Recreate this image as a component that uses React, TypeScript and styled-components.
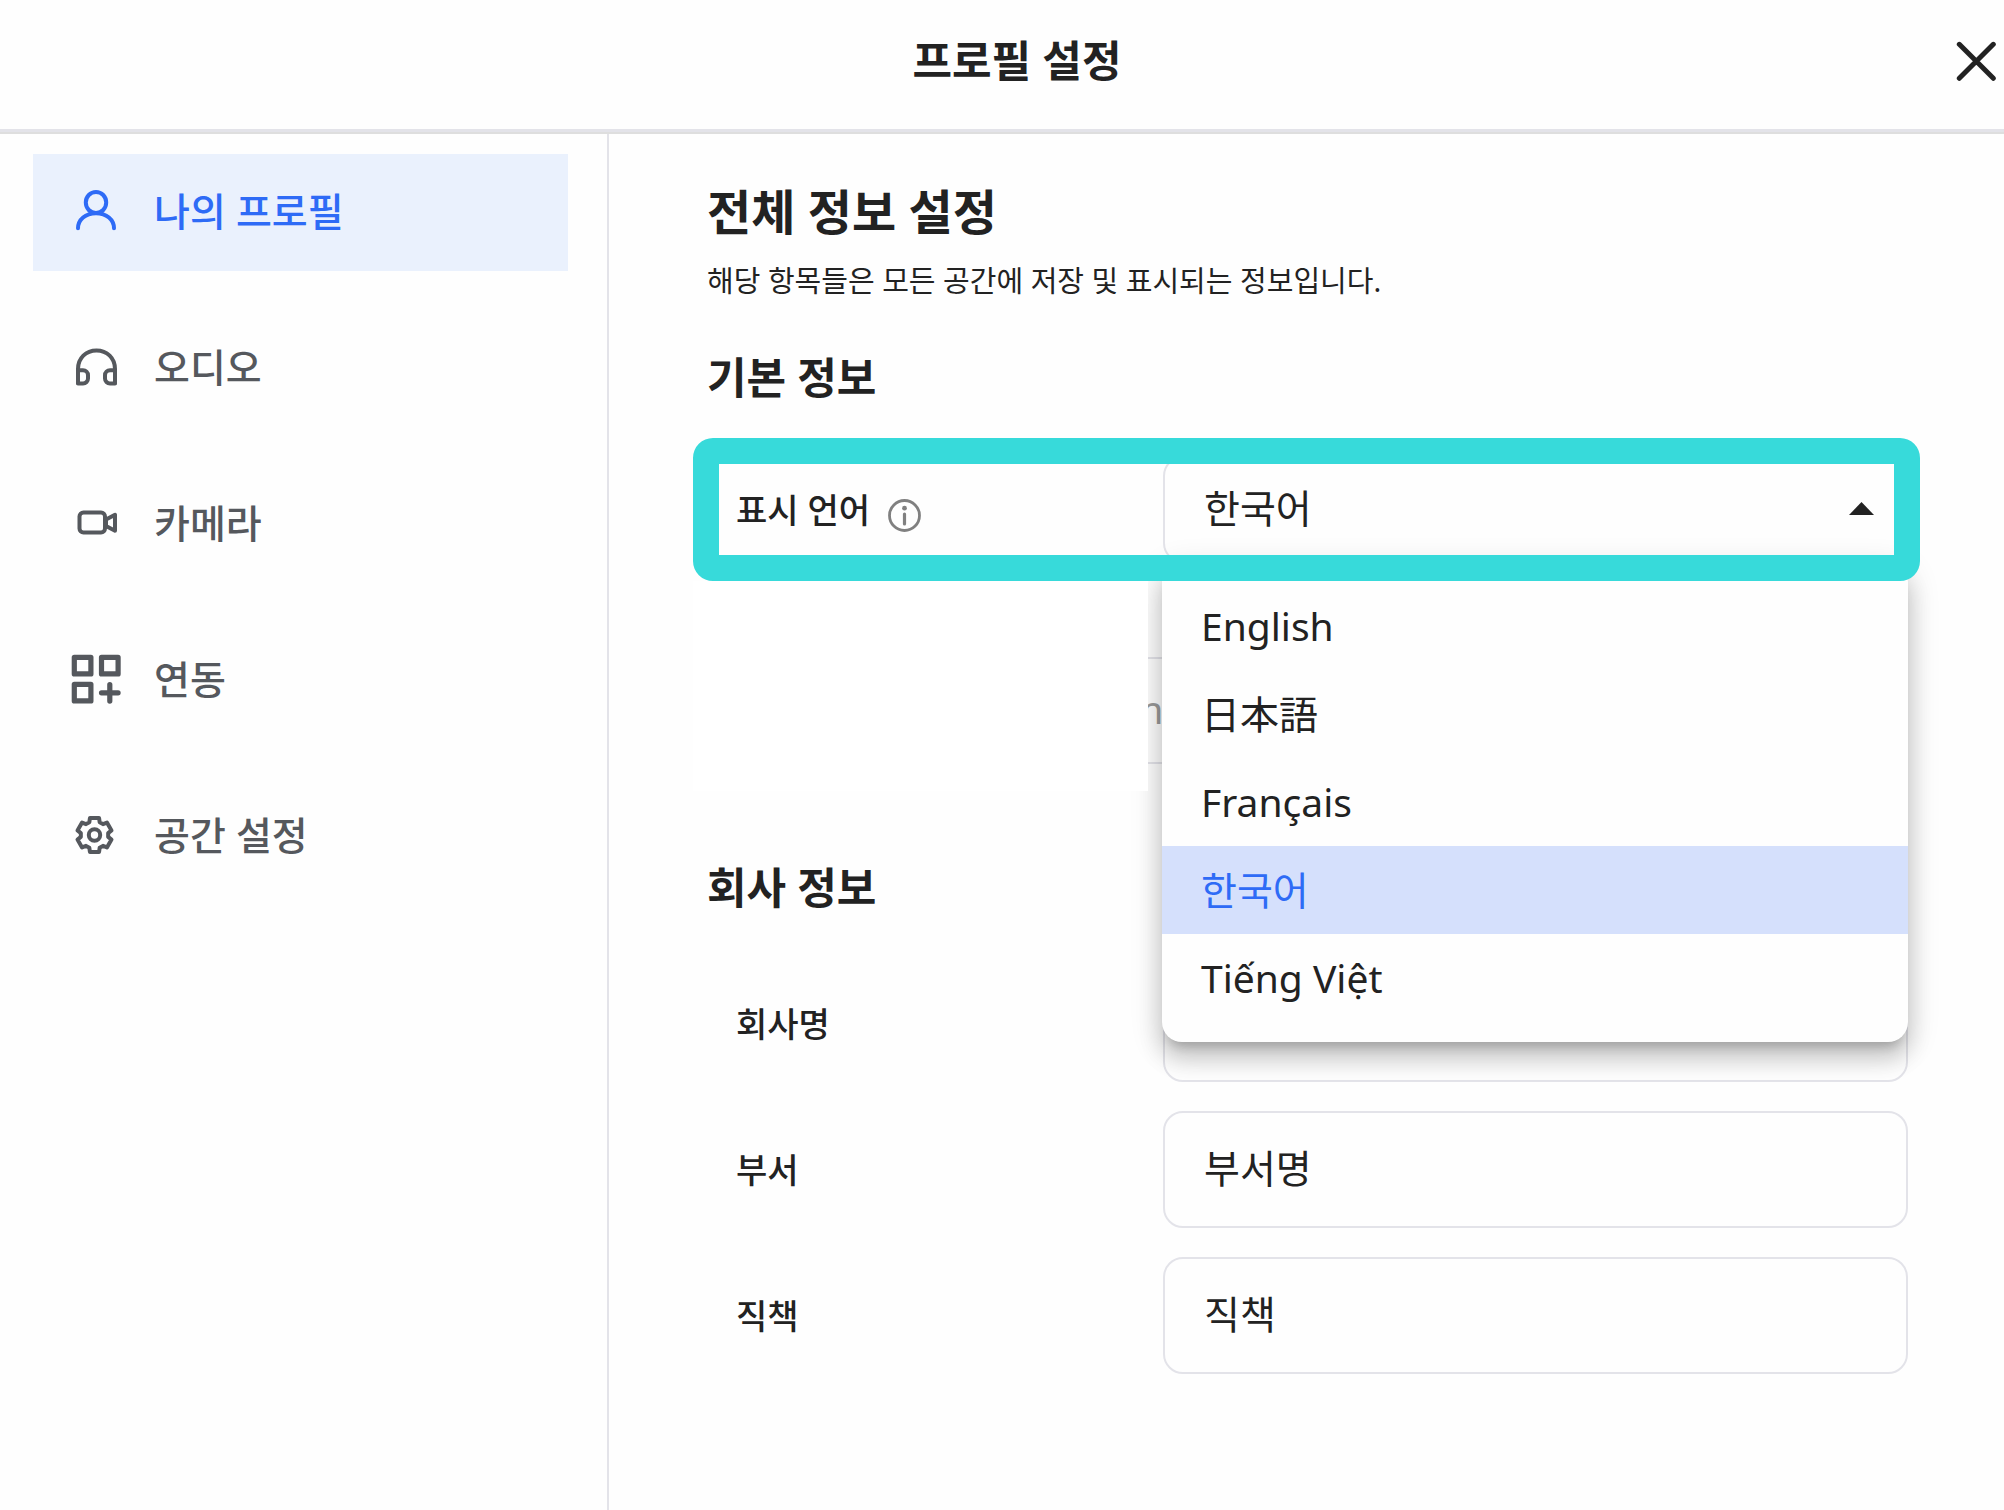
import React, { useState } from "react";
import styled, { createGlobalStyle } from "styled-components";

const color = {
  text: "#222222",
  muted: "#55585d",
  primary: "#2e6bf6",
  primarySoft: "#eaf1fd",
  selected: "#d5e0fc",
  line: "#e3e3e9",
  page: "#fefefe",
  highlight: "#37dada",
};

const GlobalStyle = createGlobalStyle`
  *, *::before, *::after { box-sizing: border-box; }
  body {
    margin: 0;
    background: ${color.page};
    color: ${color.text};
    font-family: "Noto Sans", "Noto Sans CJK KR", "Noto Sans CJK JP", sans-serif;
  }
  button, input, select { font: inherit; color: inherit; }
  h1, h2, p, ul { margin: 0; padding: 0; }
`;

const Page = styled.div`
  display: flex;
  flex-direction: column;
  min-height: 100vh;
`;

const Header = styled.header`
  display: grid;
  grid-template-columns: 40px 1fr 40px;
  align-items: center;
  height: 132px;
  padding: 0 8px 8px 38px;
  border-bottom: 3px solid ${color.line};
`;

const Title = styled.h1`
  grid-column: 2;
  font-size: 43px;
  line-height: 60px;
  font-weight: 700;
  text-align: center;
`;

const CloseButton = styled.button`
  display: flex;
  padding: 0;
  border: 0;
  background: none;
  cursor: pointer;
`;

const Body = styled.div`
  display: flex;
  flex: 1;
  border-top: 2px solid #dedede;
`;

const Sidebar = styled.nav`
  display: flex;
  flex-direction: column;
  gap: 39px;
  flex: 0 0 609px;
  padding: 20px 39px 20px 33px;
  border-right: 2px solid ${color.line};
`;

const NavItem = styled.button<{ $active: boolean }>`
  display: flex;
  align-items: center;
  gap: 34px;
  height: 117px;
  padding: 0 39px 3px;
  border: 0;
  background: ${(p) => (p.$active ? color.primarySoft : "transparent")};
  color: ${(p) => (p.$active ? color.primary : color.muted)};
  font-size: 39px;
  line-height: 56px;
  font-weight: 500;
  text-align: left;
  cursor: pointer;
`;

const NavIcon = styled.svg`
  flex: none;
  width: 48px;
  height: 48px;
  overflow: visible;
  fill: none;
  stroke: currentColor;
  stroke-width: 4;
  stroke-linecap: round;
  stroke-linejoin: round;
`;

const Main = styled.main`
  flex: 1;
  min-width: 0;
  padding: 46px 84px;
`;

const PageHeading = styled.h2`
  padding: 0 14px;
  font-size: 48px;
  line-height: 64px;
  font-weight: 700;
`;

const Description = styled.p`
  padding: 17px 14px 47px;
  font-size: 29px;
  line-height: 40px;
`;

const SectionHeading = styled.h2`
  padding: 0 14px;
  font-size: 43px;
  line-height: 60px;
  font-weight: 700;
`;

const Highlight = styled.div`
  position: relative;
  margin-top: 30px;
  padding: 18px 0;

  &::after {
    content: "";
    position: absolute;
    inset: 0;
    z-index: 3;
    border: 26px solid ${color.highlight};
    border-radius: 20px;
    pointer-events: none;
  }
`;

const Row = styled.div`
  display: grid;
  grid-template-columns: 427px 1fr;
  align-items: center;
  padding: 0 12px 0 43px;
`;

const LabelLine = styled.div`
  display: flex;
  align-items: flex-end;
  gap: 18px;
`;

const Label = styled.label`
  font-size: 34px;
  line-height: 44px;
  font-weight: 500;
`;

const InfoButton = styled.button`
  display: flex;
  padding: 0;
  border: 0;
  background: none;
  color: #808080;
`;

const SelectWrap = styled.div`
  position: relative;
`;

const Select = styled.select`
  display: block;
  width: 100%;
  height: 107px;
  padding: 0 39px 4px;
  border: 2px solid ${color.line};
  border-radius: 20px;
  background: transparent;
  appearance: none;
  font-size: 39px;
  outline: none;
`;

const Arrow = styled.svg`
  position: absolute;
  top: 46px;
  right: 34px;
  width: 25px;
  height: 13px;
  fill: ${color.text};
  pointer-events: none;
`;

const Menu = styled.ul`
  position: absolute;
  top: 106px;
  left: -1px;
  right: 0;
  z-index: 2;
  padding: 20px 0;
  border-radius: 20px;
  background: ${color.page};
  list-style: none;
  box-shadow:
    0 11px 11px -7px rgba(0, 0, 0, 0.2),
    0 17px 22px 2px rgba(0, 0, 0, 0.14),
    0 7px 30px 4px rgba(0, 0, 0, 0.12);
`;

const Option = styled.li<{ $selected: boolean }>`
  height: 88px;
  padding: 0 39px;
  background: ${(p) => (p.$selected ? color.selected : "transparent")};
  color: ${(p) => (p.$selected ? color.primary : color.text)};
  font-size: 39px;
  line-height: 87px;
  cursor: pointer;
`;

const EmailRow = styled.div`
  display: flex;
  align-items: center;
  height: 210px;
  margin-bottom: 67px;
  padding-right: 12px;
`;

const EmailCover = styled.div`
  position: relative;
  z-index: 3;
  flex: 0 0 455px;
  height: 210px;
  background: #ffffff;
`;

const EmailInput = styled.input`
  flex: 1;
  min-width: 0;
  height: 107px;
  margin: 49px 0 0 -48px;
  padding: 0 25px 4px;
  border: 2px solid ${color.line};
  border-radius: 20px;
  background: transparent;
  color: #999999;
  font-size: 39px;
  outline: none;
`;

const Fields = styled.div`
  display: flex;
  flex-direction: column;
  gap: 29px;
  margin-top: 47px;
`;

const Input = styled.input`
  display: block;
  width: 100%;
  height: 117px;
  padding: 0 39px 8px;
  border: 2px solid ${color.line};
  border-radius: 20px;
  background: transparent;
  font-size: 39px;
  outline: none;
`;

const UserIcon = () => (
  <NavIcon viewBox="0 0 48 48" aria-hidden="true">
    <ellipse cx="24" cy="15.5" rx="10.2" ry="10.6" />
    <path d="M6 41.3C6 32.5 13.5 26.2 24 26.2S42 32.5 42 41.3" />
  </NavIcon>
);

const HeadphonesIcon = () => (
  <NavIcon viewBox="0 0 48 48" aria-hidden="true">
    <path d="M6 40V26C6 15 14 7.5 24.5 7.5S43 15 43 26V40" />
    <path d="M6 27.3h5a5 5 0 0 1 5 5v3.2a5 5 0 0 1-5 5H6z" />
    <path d="M43 27.3h-5a5 5 0 0 0-5 5v3.2a5 5 0 0 0 5 5h5z" />
  </NavIcon>
);

const CameraIcon = () => (
  <NavIcon viewBox="0 0 48 48" aria-hidden="true">
    <rect x="7.5" y="13.5" width="25.5" height="20" rx="4" />
    <path d="M34 20.5l9-4.7v16l-9-4.7z" />
  </NavIcon>
);

const AppsIcon = () => (
  <NavIcon viewBox="0 0 48 48" aria-hidden="true">
    <g strokeWidth="5.2">
      <rect x="2.3" y="2.3" width="16.6" height="16.6" />
      <rect x="29.5" y="2.3" width="16.6" height="16.6" />
      <rect x="2.3" y="29.3" width="16.6" height="16.6" />
      <path d="M37.8 29.5v16.6M29.5 37.8h16.6" />
    </g>
  </NavIcon>
);

const gearOutline = [0, 1, 2, 3, 4, 5]
  .flatMap((tooth) =>
    [
      [-22, 13.8],
      [-15, 17.6],
      [15, 17.6],
      [22, 13.8],
    ].map(([offset, radius]) => {
      const angle = ((tooth * 60 - 90 + offset) * Math.PI) / 180;
      const x = 22.5 + radius * Math.cos(angle);
      const y = 24 + radius * Math.sin(angle);
      return `${x.toFixed(2)},${y.toFixed(2)}`;
    })
  )
  .join(" ");

const GearIcon = () => (
  <NavIcon viewBox="0 0 48 48" aria-hidden="true">
    <polygon points={gearOutline} />
    <circle cx="22.5" cy="24" r="5.7" />
  </NavIcon>
);

const navItems = [
  { name: "나의 프로필", Icon: UserIcon },
  { name: "오디오", Icon: HeadphonesIcon },
  { name: "카메라", Icon: CameraIcon },
  { name: "연동", Icon: AppsIcon },
  { name: "공간 설정", Icon: GearIcon },
];

const languages = [
  { code: "en", name: "English" },
  { code: "ja", name: "日本語" },
  { code: "fr", name: "Français" },
  { code: "ko", name: "한국어" },
  { code: "vi", name: "Tiếng Việt" },
];

const companyFields = [
  { id: "company", label: "회사명", value: "" },
  { id: "department", label: "부서", value: "부서명" },
  { id: "position", label: "직책", value: "직책" },
];

export default function App() {
  const [active, setActive] = useState(0);
  const [language, setLanguage] = useState("ko");

  return (
    <Page lang="ko">
      <GlobalStyle />
      <Header>
        <Title>프로필 설정</Title>
        <CloseButton type="button" aria-label="닫기">
          <svg width="40" height="40" viewBox="0 0 40 40" aria-hidden="true">
            <path
              d="M3.3 3.3l34 34M37.3 3.3l-34 34"
              stroke={color.text}
              strokeWidth="5"
              strokeLinecap="round"
            />
          </svg>
        </CloseButton>
      </Header>
      <Body>
        <Sidebar>
          {navItems.map(({ name, Icon }, index) => (
            <NavItem
              key={name}
              type="button"
              $active={index === active}
              onClick={() => setActive(index)}
            >
              <Icon />
              {name}
            </NavItem>
          ))}
        </Sidebar>
        <Main>
          <PageHeading>전체 정보 설정</PageHeading>
          <Description>해당 항목들은 모든 공간에 저장 및 표시되는 정보입니다.</Description>

          <SectionHeading>기본 정보</SectionHeading>
          <Highlight>
            <Row>
              <LabelLine>
                <Label htmlFor="language">표시 언어</Label>
                <InfoButton type="button" aria-label="도움말">
                  <svg width="33" height="33" viewBox="0 0 33 33" aria-hidden="true">
                    <circle cx="16.5" cy="16.5" r="15" fill="none" stroke="currentColor" strokeWidth="2.8" />
                    <circle cx="16.5" cy="9.2" r="2.4" fill="currentColor" />
                    <path d="M16.5 15v10" stroke="currentColor" strokeWidth="3.2" strokeLinecap="round" />
                  </svg>
                </InfoButton>
              </LabelLine>
              <SelectWrap>
                <Select
                  id="language"
                  value={language}
                  onChange={(event) => setLanguage(event.target.value)}
                >
                  {languages.map(({ code, name }) => (
                    <option key={code} value={code}>
                      {name}
                    </option>
                  ))}
                </Select>
                <Arrow viewBox="0 0 25 13" aria-hidden="true">
                  <path d="M12.5 0L25 13H0z" />
                </Arrow>
                <Menu role="listbox" aria-label="표시 언어">
                  {languages.map(({ code, name }) => (
                    <Option
                      key={code}
                      role="option"
                      lang={code}
                      aria-selected={code === language}
                      $selected={code === language}
                      onClick={() => setLanguage(code)}
                    >
                      {name}
                    </Option>
                  ))}
                </Menu>
              </SelectWrap>
            </Row>
          </Highlight>
          <EmailRow>
            <EmailCover />
            <EmailInput aria-label="이메일" defaultValue="m" readOnly />
          </EmailRow>

          <SectionHeading>회사 정보</SectionHeading>
          <Fields>
            {companyFields.map(({ id, label, value }) => (
              <Row key={id}>
                <Label htmlFor={id}>{label}</Label>
                <Input id={id} defaultValue={value} />
              </Row>
            ))}
          </Fields>
        </Main>
      </Body>
    </Page>
  );
}
